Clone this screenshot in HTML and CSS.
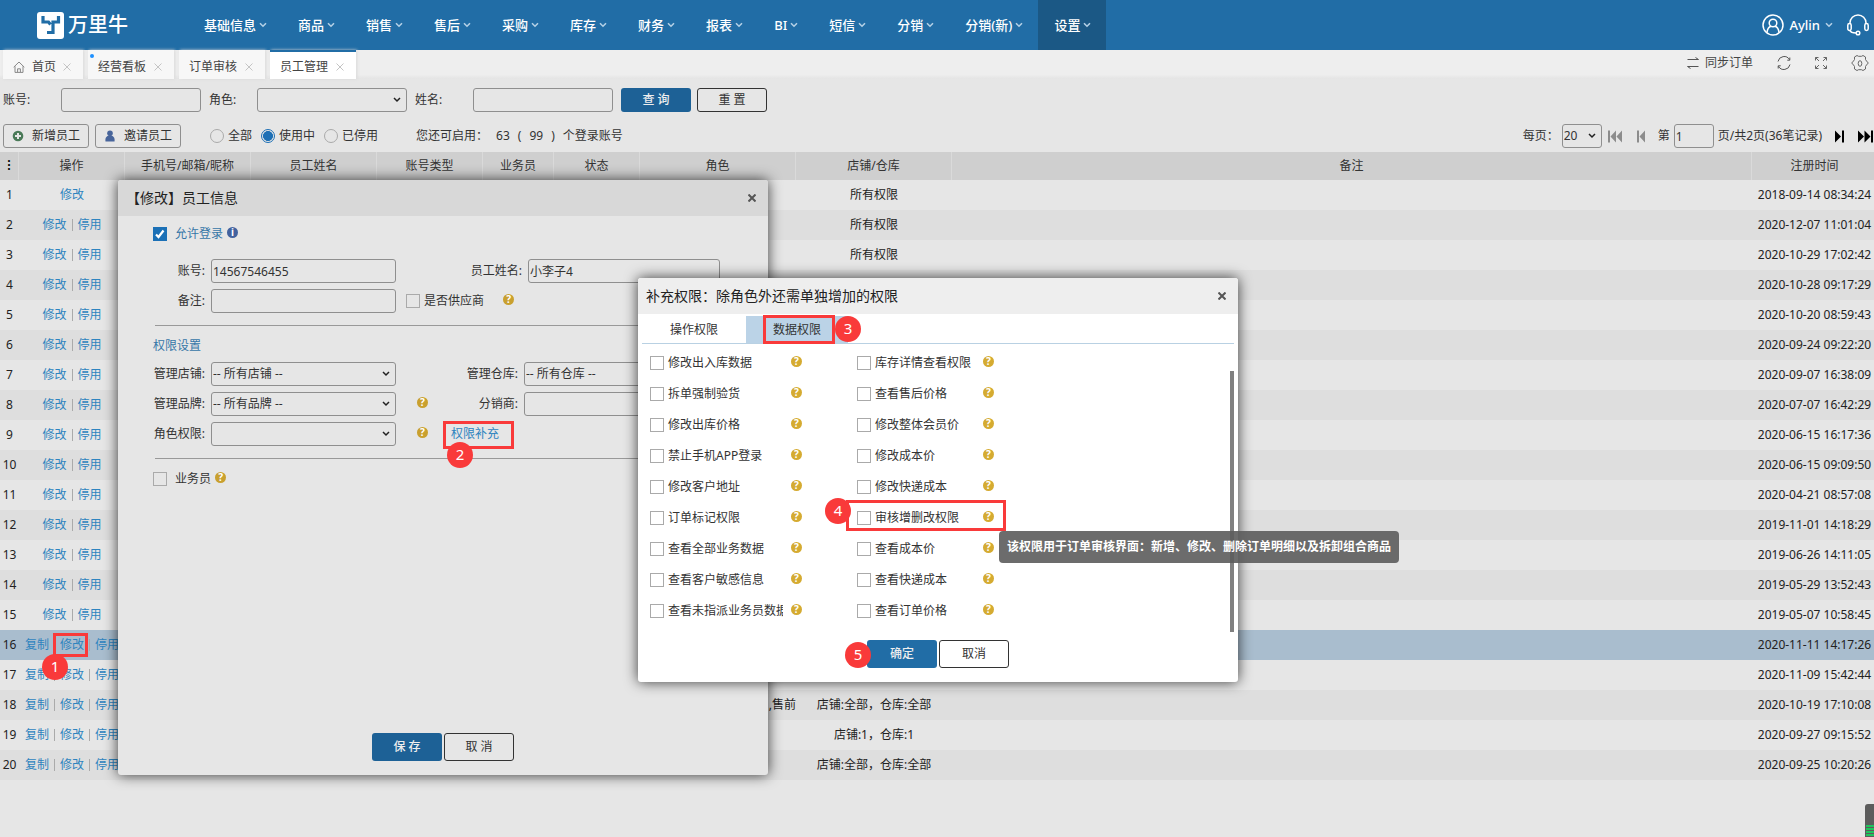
FILE: index.html
```html
<!DOCTYPE html>
<html lang="zh-CN">
<head>
<meta charset="utf-8">
<title>员工管理</title>
<link rel="stylesheet" href="styles.css">
</head>
<body>
<svg class="sprite" aria-hidden="true">
  <symbol id="i-chev" viewBox="0 0 8 6"><path d="M1 1.2l3 3 3-3" fill="none" stroke="currentColor" stroke-width="1.6"/></symbol>
  <symbol id="i-x" viewBox="0 0 8 8"><path d="M.5.5l7 7M7.500.5l-7 7" fill="none" stroke="currentColor"/></symbol>
</svg>
<header class="topbar">
  <a class="brand" href="#">
    <svg class="brand-mark" viewBox="0 0 27 27"><rect width="27" height="27" rx="3" fill="#fff"/><path d="M6 4v6h5.500l2 2.500M21.500 4v6H16v10.500H10" fill="none" stroke="#216da6" stroke-width="3.200"/></svg>
    <span class="brand-name">万里牛</span>
  </a>
  <nav class="menu">
    <a href="#">基础信息<svg class="chev"><use href="#i-chev"/></svg></a>
    <a href="#">商品<svg class="chev"><use href="#i-chev"/></svg></a>
    <a href="#">销售<svg class="chev"><use href="#i-chev"/></svg></a>
    <a href="#">售后<svg class="chev"><use href="#i-chev"/></svg></a>
    <a href="#">采购<svg class="chev"><use href="#i-chev"/></svg></a>
    <a href="#">库存<svg class="chev"><use href="#i-chev"/></svg></a>
    <a href="#">财务<svg class="chev"><use href="#i-chev"/></svg></a>
    <a href="#">报表<svg class="chev"><use href="#i-chev"/></svg></a>
    <a href="#">BI<svg class="chev"><use href="#i-chev"/></svg></a>
    <a href="#">短信<svg class="chev"><use href="#i-chev"/></svg></a>
    <a href="#">分销<svg class="chev"><use href="#i-chev"/></svg></a>
    <a href="#">分销(新)<svg class="chev"><use href="#i-chev"/></svg></a>
    <a href="#" class="current">设置<svg class="chev"><use href="#i-chev"/></svg></a>
  </nav>
  <div class="account">
    <a href="#" class="user"><svg class="avatar" viewBox="0 0 22 22" fill="none" stroke="#fff" stroke-width="1.500"><circle cx="11" cy="11" r="10"/><circle cx="11" cy="9" r="3.800"/><path d="M5 18.500c.4-3.500 2-5.600 4-6.200M17 18.500c-.4-3.500-2-5.600-4-6.200"/></svg>Aylin<svg class="chev"><use href="#i-chev"/></svg></a>
    <svg class="headset" viewBox="0 0 22 22" fill="none" stroke="#fff" stroke-width="1.500"><path d="M3 10V9a8 8 0 0 1 16 0v1"/><rect x=".8" y="9.500" width="3.400" height="7" rx="1.700"/><rect x="17.800" y="9.500" width="3.400" height="7" rx="1.700"/><path d="M3 16.500c.6 2 2 2.500 6 2.500"/><circle cx="11" cy="19" r="1.800"/></svg>
  </div>
</header>

<div class="tabbar">
  <div class="tab"><svg class="home" viewBox="0 0 12 12" fill="none" stroke="#888"><path d="M.7 6.200L6 1l5.300 5.200M2 5.300v6.100h8V5.300M4.600 11V7.800h2.800V11"/></svg>首页<svg class="close"><use href="#i-x"/></svg></div>
  <div class="tab dotted">经营看板<svg class="close"><use href="#i-x"/></svg></div>
  <div class="tab">订单审核<svg class="close"><use href="#i-x"/></svg></div>
  <div class="tab active">员工管理<svg class="close"><use href="#i-x"/></svg></div>
  <div class="tools">
    <a href="#"><svg class="t12" viewBox="0 0 12 12" fill="none" stroke="#555"><path d="M.5 2.500h11L8.500.5M11.500 9.500H.5l3 2"/></svg>同步订单</a>
    <svg class="t14" viewBox="0 0 14 14" fill="none" stroke="#555"><path d="M1 5.500a6.200 6.200 0 0 1 11.500-1.800M13 8.500a6.200 6.200 0 0 1-11.500 1.800M12.800 1.500v2.700h-2.500M1.200 12.500V9.800h2.500"/></svg>
    <svg class="t12" viewBox="0 0 12 12" fill="none" stroke="#666"><path d="M.5 3.500v-3h3M.5.5l3.500 3.500M8.500.5h3v3M11.500.5L8 4M.5 8.500v3h3M.5 11.500L4 8M8.500 11.500h3v-3M11.500 11.500L8 8"/></svg>
    <svg class="t18" viewBox="0 0 18 18" fill="none" stroke="#666"><path d="M6 1.500l1.500.8h3l1.500-.8 2.500 1.500v2.500l1 1.500 1.800 2-1.800 2-1 1.500V15L12 16.500l-1.500-.8h-3L6 16.500 3.500 15v-2.500l-1-1.500L.7 9l1.800-2 1-1.500V3z"/><ellipse cx="9" cy="9.500" rx="1.800" ry="2.800"/></svg>
  </div>
</div>

<main>
  <form class="search">
    <label class="wide" for="q-acc">账号:</label><input id="q-acc" class="box w140">
    <label class="next mid" for="q-role">角色:</label><select id="q-role" class="box w150"><option></option></select>
    <label class="next wide" for="q-name">姓名:</label><input id="q-name" class="box w140">
    <button type="button" class="btn primary lead">查 询</button><button type="button" class="btn">重 置</button>
  </form>
  <div class="actions">
    <button type="button" class="btn soft"><svg class="t12" viewBox="0 0 12 12"><circle cx="6" cy="6" r="5.300" fill="#4a7a58"/><path d="M6 3v6M3 6h6" stroke="#e6e6e6" stroke-width="2"/></svg>新增员工</button>
    <button type="button" class="btn soft"><svg class="t12" viewBox="0 0 12 12" fill="#48659b"><circle cx="6" cy="3.300" r="2.800"/><path d="M1.500 11.500c-.6-3.500 1-5 2.500-5.700h4c1.500.7 3.100 2.200 2.500 5.700z"/></svg>邀请员工</button>
    <div class="radios">
      <label><input type="radio" name="st">全部</label>
      <label><input type="radio" name="st" checked>使用中</label>
      <label><input type="radio" name="st">已停用</label>
    </div>
    <div class="quota"><span>您还可启用：</span><span>63</span><span>(</span><span>99</span><span>)</span><span>个登录账号</span></div>
    <div class="pager">
      <label for="p-size">每页：</label><select id="p-size" class="box size"><option>20</option></select>
      <svg class="pg first" viewBox="0 0 16 12" fill="#8c8c8c"><path d="M1 0h2v12H1zM9 0v12L3.500 6zM15 0v12L9.500 6z"/></svg>
      <svg class="pg prev" viewBox="0 0 9 12" fill="#8c8c8c"><path d="M0 0h2v12H0zM8 0v12L2.500 6z"/></svg>
      <label for="p-no">第</label><input id="p-no" class="box no" value="1"><span>页/共2页(36笔记录)</span>
      <svg class="pg next-pg" viewBox="0 0 9 12" fill="#000"><path d="M0 0v12l6-6zM7 0h2v12H7z"/></svg>
      <svg class="pg last" viewBox="0 0 16 12" fill="#000"><path d="M0 0v12l6-6zM6.500 0v12l6-6zM13 0h2v12h-2z"/></svg>
    </div>
  </div>

  <table class="grid">
    <colgroup><col class="c-no"><col class="c-act"><col class="c-m"><col class="c-m"><col class="c-act"><col class="c-s"><col class="c-st"><col class="c-l"><col class="c-l"><col><col class="c-time"></colgroup>
    <thead><tr><th class="dots">⁝</th><th>操作</th><th>手机号/邮箱/昵称</th><th>员工姓名</th><th>账号类型</th><th>业务员</th><th>状态</th><th>角色</th><th>店铺/仓库</th><th>备注</th><th>注册时间</th></tr></thead>
    <tbody>
      <tr><td>1</td><td><div class="ops"><a href="#">修改</a></div></td><td></td><td></td><td></td><td></td><td></td><td></td><td>所有权限</td><td></td><td>2018-09-14 08:34:24</td></tr>
      <tr><td>2</td><td><div class="ops"><a href="#">修改</a><a href="#">停用</a></div></td><td></td><td></td><td></td><td></td><td></td><td></td><td>所有权限</td><td></td><td>2020-12-07 11:01:04</td></tr>
      <tr><td>3</td><td><div class="ops"><a href="#">修改</a><a href="#">停用</a></div></td><td></td><td></td><td></td><td></td><td></td><td></td><td>所有权限</td><td></td><td>2020-10-29 17:02:42</td></tr>
      <tr><td>4</td><td><div class="ops"><a href="#">修改</a><a href="#">停用</a></div></td><td></td><td></td><td></td><td></td><td></td><td></td><td></td><td></td><td>2020-10-28 09:17:29</td></tr>
      <tr><td>5</td><td><div class="ops"><a href="#">修改</a><a href="#">停用</a></div></td><td></td><td></td><td></td><td></td><td></td><td></td><td></td><td></td><td>2020-10-20 08:59:43</td></tr>
      <tr><td>6</td><td><div class="ops"><a href="#">修改</a><a href="#">停用</a></div></td><td></td><td></td><td></td><td></td><td></td><td></td><td></td><td></td><td>2020-09-24 09:22:20</td></tr>
      <tr><td>7</td><td><div class="ops"><a href="#">修改</a><a href="#">停用</a></div></td><td></td><td></td><td></td><td></td><td></td><td></td><td></td><td></td><td>2020-09-07 16:38:09</td></tr>
      <tr><td>8</td><td><div class="ops"><a href="#">修改</a><a href="#">停用</a></div></td><td></td><td></td><td></td><td></td><td></td><td></td><td></td><td></td><td>2020-07-07 16:42:29</td></tr>
      <tr><td>9</td><td><div class="ops"><a href="#">修改</a><a href="#">停用</a></div></td><td></td><td></td><td></td><td></td><td></td><td></td><td></td><td></td><td>2020-06-15 16:17:36</td></tr>
      <tr><td>10</td><td><div class="ops"><a href="#">修改</a><a href="#">停用</a></div></td><td></td><td></td><td></td><td></td><td></td><td></td><td></td><td></td><td>2020-06-15 09:09:50</td></tr>
      <tr><td>11</td><td><div class="ops"><a href="#">修改</a><a href="#">停用</a></div></td><td></td><td></td><td></td><td></td><td></td><td></td><td></td><td></td><td>2020-04-21 08:57:08</td></tr>
      <tr><td>12</td><td><div class="ops"><a href="#">修改</a><a href="#">停用</a></div></td><td></td><td></td><td></td><td></td><td></td><td></td><td></td><td></td><td>2019-11-01 14:18:29</td></tr>
      <tr><td>13</td><td><div class="ops"><a href="#">修改</a><a href="#">停用</a></div></td><td></td><td></td><td></td><td></td><td></td><td></td><td></td><td></td><td>2019-06-26 14:11:05</td></tr>
      <tr><td>14</td><td><div class="ops"><a href="#">修改</a><a href="#">停用</a></div></td><td></td><td></td><td></td><td></td><td></td><td></td><td></td><td></td><td>2019-05-29 13:52:43</td></tr>
      <tr><td>15</td><td><div class="ops"><a href="#">修改</a><a href="#">停用</a></div></td><td></td><td></td><td></td><td></td><td></td><td></td><td></td><td></td><td>2019-05-07 10:58:45</td></tr>
      <tr class="selected"><td>16</td><td><div class="ops"><a href="#">复制</a><a href="#" class="step-host">修改<span class="frame f1"></span><b class="step s1">1</b></a><a href="#">停用</a></div></td><td></td><td></td><td></td><td></td><td></td><td></td><td></td><td></td><td>2020-11-11 14:17:26</td></tr>
      <tr><td>17</td><td><div class="ops"><a href="#">复制</a><a href="#">修改</a><a href="#">停用</a></div></td><td></td><td></td><td></td><td></td><td></td><td></td><td></td><td></td><td>2020-11-09 15:42:44</td></tr>
      <tr><td>18</td><td><div class="ops"><a href="#">复制</a><a href="#">修改</a><a href="#">停用</a></div></td><td></td><td></td><td></td><td></td><td></td><td class="end">,售前</td><td>店铺:全部，仓库:全部</td><td></td><td>2020-10-19 17:10:08</td></tr>
      <tr><td>19</td><td><div class="ops"><a href="#">复制</a><a href="#">修改</a><a href="#">停用</a></div></td><td></td><td></td><td></td><td></td><td></td><td></td><td>店铺:1，仓库:1</td><td></td><td>2020-09-27 09:15:52</td></tr>
      <tr><td>20</td><td><div class="ops"><a href="#">复制</a><a href="#">修改</a><a href="#">停用</a></div></td><td></td><td></td><td></td><td></td><td></td><td></td><td>店铺:全部，仓库:全部</td><td></td><td>2020-09-25 10:20:26</td></tr>
    </tbody>
  </table>
</main>

<section class="window employee" role="dialog" aria-label="员工信息">
  <header class="win-head"><h2>【修改】员工信息</h2><button type="button" class="win-x" aria-label="关闭"><svg class="close"><use href="#i-x"/></svg></button></header>
  <div class="win-body">
    <label class="allow"><input type="checkbox" checked><span>允许登录</span><i class="tip info">i</i></label>
    <div class="form basic">
      <label for="e-acc">账号:</label><input id="e-acc" class="box" value="14567546455">
      <label for="e-name">员工姓名:</label><input id="e-name" class="box" value="小李子4">
      <label for="e-memo">备注:</label><input id="e-memo" class="box">
      <div class="supplier"><label><input type="checkbox">是否供应商</label><i class="tip">?</i></div>
    </div>
    <hr>
    <h3>权限设置</h3>
    <div class="form rights">
      <label for="e-shop">管理店铺:</label><select id="e-shop" class="box"><option>-- 所有店铺 --</option></select>
      <label for="e-ware">管理仓库:</label><select id="e-ware" class="box"><option>-- 所有仓库 --</option></select>
      <label for="e-brand">管理品牌:</label><select id="e-brand" class="box"><option>-- 所有品牌 --</option></select>
      <div class="with-tip"><i class="tip">?</i><label for="e-dist">分销商:</label></div><input id="e-dist" class="box">
      <label for="e-role">角色权限:</label><select id="e-role" class="box"><option></option></select>
      <div class="with-tip extra"><i class="tip">?</i><a href="#" class="step-host">权限补充<span class="frame f2"></span><b class="step s2">2</b></a></div>
    </div>
    <hr>
    <label class="allow plain"><input type="checkbox"><span>业务员</span><i class="tip">?</i></label>
    <div class="buttons"><button type="button" class="btn primary">保 存</button><button type="button" class="btn">取 消</button></div>
  </div>
</section>

<section class="window perms" role="dialog" aria-label="补充权限">
  <header class="win-head"><h2>补充权限：除角色外还需单独增加的权限</h2><button type="button" class="win-x" aria-label="关闭"><svg class="close"><use href="#i-x"/></svg></button></header>
  <div class="subtabs"><button type="button">操作权限</button><button type="button" class="on step-host">数据权限<span class="frame f3"></span><b class="step s3">3</b></button></div>
  <div class="scroller">
    <div class="checks">
      <div class="check"><label><input type="checkbox">修改出入库数据</label><i class="tip">?</i></div>
      <div class="check"><label><input type="checkbox">库存详情查看权限</label><i class="tip">?</i></div>
      <div class="check"><label><input type="checkbox">拆单强制验货</label><i class="tip">?</i></div>
      <div class="check"><label><input type="checkbox">查看售后价格</label><i class="tip">?</i></div>
      <div class="check"><label><input type="checkbox">修改出库价格</label><i class="tip">?</i></div>
      <div class="check"><label><input type="checkbox">修改整体会员价</label><i class="tip">?</i></div>
      <div class="check"><label><input type="checkbox">禁止手机APP登录</label><i class="tip">?</i></div>
      <div class="check"><label><input type="checkbox">修改成本价</label><i class="tip">?</i></div>
      <div class="check"><label><input type="checkbox">修改客户地址</label><i class="tip">?</i></div>
      <div class="check"><label><input type="checkbox">修改快递成本</label><i class="tip">?</i></div>
      <div class="check"><label><input type="checkbox">订单标记权限</label><i class="tip">?</i></div>
      <div class="check step-host"><label><input type="checkbox">审核增删改权限</label><i class="tip">?</i><span class="frame f4"></span><b class="step s4">4</b><span class="hint" role="tooltip">该权限用于订单审核界面：新增、修改、删除订单明细以及拆卸组合商品</span></div>
      <div class="check"><label><input type="checkbox">查看全部业务数据</label><i class="tip">?</i></div>
      <div class="check"><label><input type="checkbox">查看成本价</label><i class="tip">?</i></div>
      <div class="check"><label><input type="checkbox">查看客户敏感信息</label><i class="tip">?</i></div>
      <div class="check"><label><input type="checkbox">查看快递成本</label><i class="tip">?</i></div>
      <div class="check"><label><input type="checkbox">查看未指派业务员数据</label><i class="tip">?</i></div>
      <div class="check"><label><input type="checkbox">查看订单价格</label><i class="tip">?</i></div>
    </div>
    <div class="thumb"></div>
  </div>
  <div class="buttons"><button type="button" class="btn primary step-host">确定<b class="step s5">5</b></button><button type="button" class="btn">取消</button></div>
</section>
<div class="monitor"></div>
</body>
</html>
```
FILE: styles.css
```css
* { box-sizing: border-box; }
html { height: 100%; }
body {
  margin: 0;
  min-height: 100%;
  position: relative;
  overflow: hidden;
  background: #e6e6e6;
  color: #333;
  font: 12px/20px "Noto Sans", "Noto Sans CJK SC", sans-serif;
}
a { color: inherit; text-decoration: none; }
h2, h3 { margin: 0; font-weight: 400; }
svg { flex: none; display: block; }
button, input, select { font: inherit; color: inherit; margin: 0; }
i { font-style: normal; }
.sprite { position: absolute; width: 0; height: 0; }
.chev { width: 8px; height: 6px; color: #b4d0e6; }
.close { width: 8px; height: 8px; }
.t12 { width: 12px; height: 12px; }
.t14 { width: 14px; height: 14px; }
.t18 { width: 18px; height: 18px; }

.topbar { display: flex; height: 50px; background: #216da6; color: #fff; font-size: 13px; font-weight: 500; }
.brand { display: flex; align-items: center; gap: 4px; width: 188px; padding-left: 37px; }
.brand-mark { width: 27px; height: 27px; }
.brand-name { font-size: 20px; font-weight: 500; }
.menu { display: flex; }
.menu a { display: flex; align-items: center; gap: 3px; padding: 0 15px 0 16px; }
.menu .current { background: #1b5885; }
.account { margin-left: auto; display: flex; align-items: center; gap: 14px; padding-right: 5px; }
.user { display: flex; align-items: center; gap: 5px; }
.avatar, .headset { width: 22px; height: 22px; }

.tabbar { display: flex; gap: 5px; height: 29px; padding-left: 3px; background: linear-gradient(#eee 85%, #e4e4e4); color: #444; }
.tab { position: relative; display: flex; align-items: center; gap: 8px; padding: 4px 12px 0 10px; background: #f7f7f7; box-shadow: 1px 0 3px #d8d8d8; }
.tab:first-child { gap: 7px; }
.tab .close { color: #c4c4c4; }
.tab.active { background: #fff; border-top: 2px solid #216da6; padding-top: 2px; }
.home { width: 12px; height: 12px; }
.dotted::before { content: ""; position: absolute; left: 2px; top: 4px; width: 4px; height: 4px; border-radius: 2px; background: #1e90ff; }
.tools { margin-left: auto; display: flex; align-items: center; gap: 24px; padding: 0 5px 4px 0; }
.tools a { display: flex; align-items: center; gap: 6px; }

.box { height: 24px; min-width: 0; border: 1px solid #8f8f8f; border-radius: 3px; background-color: transparent; padding: 0 1px; }
select.box {
  appearance: none;
  background: url("data:image/svg+xml,%3Csvg xmlns='http://www.w3.org/2000/svg' width='8' height='6'%3E%3Cpath d='M1 1l3 3 3-3' fill='none' stroke='%23222' stroke-width='1.500'/%3E%3C/svg%3E") no-repeat right 5px center;
}
.w140 { width: 140px; }
.w150 { width: 150px; }
.btn { width: 70px; height: 24px; padding: 0; border: 1px solid #333; border-radius: 3px; background: transparent; }
.btn.primary { border-color: transparent; background: #1d6196; color: #eee; font-weight: 500; }
.search { display: flex; align-items: center; padding: 9px 0 0 3px; }
.search .wide { width: 58px; }
.search .mid { width: 48px; }
.search .next { margin-left: 8px; }
.search .lead { margin: 0 6px 0 8px; }

.actions { display: flex; align-items: center; gap: 6px; padding: 12px 0 4px 3px; }
.btn.soft { display: flex; align-items: center; justify-content: center; gap: 8px; width: 86px; border-color: #8f8f8f; }
.radios { display: flex; gap: 9px; padding-left: 23px; }
.radios label { display: flex; align-items: center; gap: 4px; }
input[type="radio"] { appearance: none; width: 14px; height: 14px; border: 1px solid #aaa; border-radius: 50%; }
input[type="radio"]:checked { border-color: #1d6fb5; background: radial-gradient(#1d6fb5 55%, #e6e6e6 62%); }
.quota { display: flex; gap: 8px; padding-left: 32px; }
.pager { margin-left: auto; display: flex; align-items: center; }
.size { width: 40px; margin-left: 3px; }
.no { width: 40px; margin: 0 4px; }
.pg { height: 13px; }
.first, .last { width: 16px; }
.prev, .next-pg { width: 9px; }
.first { margin: 0 14px 0 5px; }
.prev { margin-right: 12px; }
.next-pg { margin: 0 14px 0 13px; }

.grid { width: 100%; table-layout: fixed; border-collapse: separate; border-spacing: 0; text-align: center; white-space: nowrap; color: #222; }
.grid th, .grid td { padding: 0; }
.grid th { height: 28px; background: #cfcfcf; font-weight: 400; color: #333; border-right: 1px solid #dadada; }
.grid th.dots { font-weight: 700; color: #000; }
.grid th:last-child, .grid td:last-child { padding-left: 3px; border-right: 0; }
.grid td { height: 30px; }
.grid tbody tr:nth-child(even) { background: #dedede; }
.grid tbody tr.selected { background: #a9bdce; }
.grid .end { text-align: right; }
.c-no { width: 19px; }
.c-act { width: 106px; }
.c-m { width: 126px; }
.c-s { width: 71px; }
.c-st { width: 86px; }
.c-l { width: 156px; }
.c-time { width: 122px; }
.ops { display: flex; justify-content: center; color: #2e84bf; }
.ops a + a::before { content: ""; display: inline-block; width: 1px; height: 12px; margin: 0 5px; background: #aaa; vertical-align: -2px; }

.step-host { position: relative; }
.frame { position: absolute; border: 3px solid #f93a3a; z-index: 1; }
.step { position: absolute; z-index: 2; width: 26px; height: 26px; border-radius: 50%; background: #f93a3a; color: #fff; font: 400 15px/24px "Noto Sans", sans-serif; text-align: center; }
.f1 { left: 4px; top: -2px; width: 35px; height: 24px; }
.s1 { left: -7px; top: 19px; }
.f2 { left: -8px; top: -3px; width: 71px; height: 28px; }
.s2 { left: -4px; top: 18px; }
.f3 { left: 17px; top: -1px; width: 72px; height: 29px; }
.s3 { left: 89px; top: 0; }
.f4 { left: -11px; top: -8px; width: 160px; height: 31px; }
.s4 { left: -32px; top: -10px; }
.s5 { left: -23px; top: 1px; }

.window { position: absolute; display: flex; flex-direction: column; border-radius: 3px; box-shadow: 0 0 14px rgba(0, 0, 0, .75); }
.win-head { display: flex; align-items: center; justify-content: space-between; height: 36px; padding: 0 12px 0 8px; border-radius: 3px 3px 0 0; }
.win-head h2 { font-size: 14px; color: #222; }
.win-x { border: 0; padding: 0; background: none; color: #555; }
.win-x .close { stroke-width: 2; }
.tip { flex: none; width: 11px; height: 11px; margin-bottom: 4px; border-radius: 50%; background: #c9a02e; color: #fff; font: 700 10px/11px "Noto Sans", sans-serif; text-align: center; }
.tip.info { background: #42629f; }
input[type="checkbox"] { appearance: none; flex: none; width: 14px; height: 14px; border: 1px solid #aaa; }
input[type="checkbox"]:checked { border-color: #1b70b6; background: #1b70b6 url("data:image/svg+xml,%3Csvg xmlns='http://www.w3.org/2000/svg' width='12' height='12'%3E%3Cpath d='M2 6.500l2.500 2.500L9.500 2.500' fill='none' stroke='%23fff' stroke-width='2.200'/%3E%3C/svg%3E"); }

.employee { left: 118px; top: 180px; width: 650px; min-height: 595px; background: #e6e6e6; z-index: 10; }
.employee .win-head { background: #d8d8d8; }
.win-body { flex: 1; display: flex; flex-direction: column; padding: 7px 35px 14px; }
.allow { display: flex; align-items: center; height: 22px; color: #3777a8; }
.allow span { margin: 0 4px 0 8px; }
.allow.plain { color: inherit; }
.form { display: grid; grid-auto-rows: 24px; gap: 6px; align-items: center; }
.form label { text-align: right; white-space: nowrap; }
.basic { grid-template-columns: 52px 185px 120px 192px; margin-top: 14px; }
.rights { grid-template-columns: 52px 185px 116px 192px; margin-top: 5px; }
.supplier { grid-column: span 2; display: flex; align-items: center; gap: 19px; padding-left: 4px; }
.supplier label { display: flex; align-items: center; gap: 4px; }
.with-tip { display: flex; align-items: center; justify-content: space-between; padding-left: 15px; }
.with-tip.extra { grid-column: span 2; justify-content: flex-start; gap: 23px; color: #2e84bf; }
hr { width: 100%; height: 1px; margin: 12px 0 9px 2px; border: 0; background: #999; }
h3 { font-size: 12px; line-height: 22px; color: #3777a8; }
.buttons { display: flex; justify-content: center; gap: 2px; margin-top: auto; }
.buttons .btn { height: 28px; }

.perms { left: 638px; top: 278px; width: 600px; min-height: 404px; padding-bottom: 14px; background: #fff; z-index: 20; }
.perms .win-head { background: #eee; }
.subtabs { display: flex; margin: 2px 4px 0; border-bottom: 1px solid #b9d1e3; }
.subtabs button { width: 102px; height: 27px; border: 0; padding: 0; background: none; }
.subtabs button:first-child { width: 104px; }
.subtabs .on { background: #bbd3e7; }
.scroller { display: flex; justify-content: space-between; padding: 9px 4px 0 12px; }
.checks { display: grid; grid-template-columns: 207px 207px; grid-auto-rows: 31px; }
.check { display: flex; height: 20px; justify-content: space-between; width: 152px; }
.check:nth-child(even) { width: 137px; }
.check label { display: flex; align-items: center; gap: 4px; max-width: 133px; white-space: nowrap; overflow: hidden; }
.check .tip { margin: 3px 0 0; background: #d5ab31; }
.thumb { width: 4px; height: 261px; margin-top: 18px; background: #808080; }
.perms .buttons .primary { background: #216da6; }
.hint { position: absolute; z-index: 3; left: 142px; top: 23px; padding: 6px 8px; border-radius: 4px; background: rgba(92, 92, 92, .9); color: #fff; font-weight: 600; white-space: nowrap; }

.monitor { position: absolute; right: 0; bottom: 0; width: 9px; height: 33px; border-radius: 3px 0 0 0; background: repeating-linear-gradient(#1fc45c 0 2px, #5c5c5c 2px 3px) 1px 21px no-repeat, #5c5c5c; }
```
